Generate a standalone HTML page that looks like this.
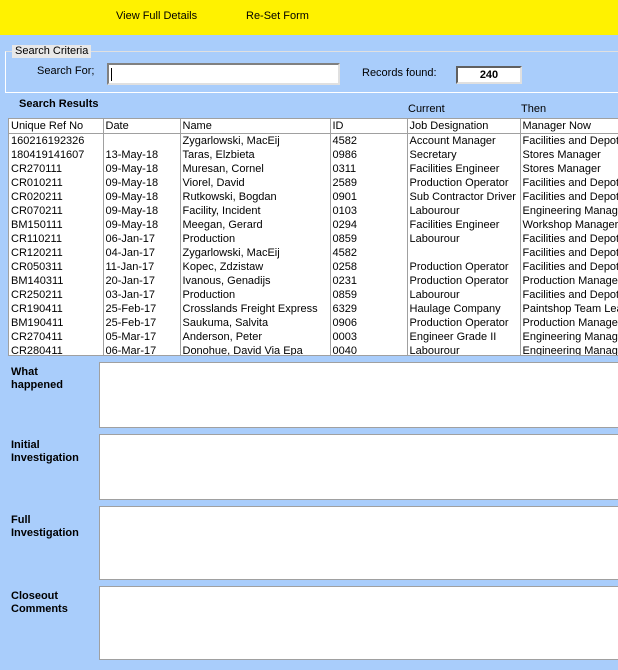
<!DOCTYPE html><html><head><style>
body{margin:0;width:618px;height:670px;overflow:hidden;background:#a9cdfb;font-family:"Liberation Sans","DejaVu Sans",sans-serif;font-size:11px;color:#000;position:relative}
.a{position:absolute}
.top{left:0;top:0;width:618px;height:35px;background:#fff200}
table{border-collapse:collapse;table-layout:fixed}
td{border-right:1px solid #a0a0a0;height:14px;padding:0 0 0 2px;white-space:nowrap;overflow:hidden;line-height:14px}
tr.h td{border-bottom:1px solid #a0a0a0;height:13px}
.box{background:#fff;border:1px solid #a0a0a0;box-sizing:border-box}
.lbl{font-weight:bold;left:11px;line-height:13px}
</style></head><body>
<div class="a top"></div>
<div class="a" style="left:116px;top:10px">View Full Details</div>
<div class="a" style="left:246px;top:10px">Re-Set Form</div>
<div class="a" style="left:5px;top:51px;width:620px;height:42px;border:1px solid #fff;border-top-color:#e0e0e0;box-sizing:border-box;border-right:none"></div>
<div class="a" style="left:12px;top:45px;background:#e8e8e8;padding:0 3px;line-height:13px">Search Criteria</div>
<div class="a" style="left:37px;top:65px">Search For;</div>
<div class="a box" style="left:107px;top:63px;width:233px;height:22px;border:2px solid;border-color:#808080 #e0e0e0 #e0e0e0 #808080"><div style="position:absolute;left:2px;top:3px;width:1px;height:13px;background:#000"></div></div>
<div class="a" style="left:362px;top:67px">Records found:</div>
<div class="a box" style="left:456px;top:66px;width:66px;height:18px;border:2px solid;border-color:#606060 #e0e0e0 #e0e0e0 #606060;text-align:center;font-weight:bold;line-height:14px">240</div>
<div class="a" style="left:19px;top:98px;font-weight:bold">Search Results</div>
<div class="a" style="left:408px;top:103px">Current</div>
<div class="a" style="left:521px;top:103px">Then</div>
<div class="a" style="left:8px;top:118px;width:612px;height:238px;background:#fff;border:1px solid #a0a0a0;border-right:none;overflow:hidden;box-sizing:border-box">
<table style="width:620px">
<colgroup><col style="width:94px"><col style="width:77px"><col style="width:150px"><col style="width:77px"><col style="width:113px"><col style="width:109px"></colgroup>
<tr class="h"><td>Unique Ref No</td><td>Date</td><td>Name</td><td>ID</td><td>Job Designation</td><td>Manager Now</td></tr>
<tr><td>160216192326</td><td></td><td>Zygarlowski, MacEij</td><td>4582</td><td>Account Manager</td><td>Facilities and Depot</td></tr>
<tr><td>180419141607</td><td>13-May-18</td><td>Taras, Elzbieta</td><td>0986</td><td>Secretary</td><td>Stores Manager</td></tr>
<tr><td>CR270111</td><td>09-May-18</td><td>Muresan, Cornel</td><td>0311</td><td>Facilities Engineer</td><td>Stores Manager</td></tr>
<tr><td>CR010211</td><td>09-May-18</td><td>Viorel, David</td><td>2589</td><td>Production Operator</td><td>Facilities and Depot</td></tr>
<tr><td>CR020211</td><td>09-May-18</td><td>Rutkowski, Bogdan</td><td>0901</td><td>Sub Contractor Driver</td><td>Facilities and Depot</td></tr>
<tr><td>CR070211</td><td>09-May-18</td><td>Facility, Incident</td><td>0103</td><td>Labourour</td><td>Engineering Manager</td></tr>
<tr><td>BM150111</td><td>09-May-18</td><td>Meegan, Gerard</td><td>0294</td><td>Facilities Engineer</td><td>Workshop Manager</td></tr>
<tr><td>CR110211</td><td>06-Jan-17</td><td>Production</td><td>0859</td><td>Labourour</td><td>Facilities and Depot</td></tr>
<tr><td>CR120211</td><td>04-Jan-17</td><td>Zygarlowski, MacEij</td><td>4582</td><td></td><td>Facilities and Depot</td></tr>
<tr><td>CR050311</td><td>11-Jan-17</td><td>Kopec, Zdzistaw</td><td>0258</td><td>Production Operator</td><td>Facilities and Depot</td></tr>
<tr><td>BM140311</td><td>20-Jan-17</td><td>Ivanous, Genadijs</td><td>0231</td><td>Production Operator</td><td>Production Manager</td></tr>
<tr><td>CR250211</td><td>03-Jan-17</td><td>Production</td><td>0859</td><td>Labourour</td><td>Facilities and Depot</td></tr>
<tr><td>CR190411</td><td>25-Feb-17</td><td>Crosslands Freight Express</td><td>6329</td><td>Haulage Company</td><td>Paintshop Team Leader</td></tr>
<tr><td>BM190411</td><td>25-Feb-17</td><td>Saukuma, Salvita</td><td>0906</td><td>Production Operator</td><td>Production Manager</td></tr>
<tr><td>CR270411</td><td>05-Mar-17</td><td>Anderson, Peter</td><td>0003</td><td>Engineer Grade II</td><td>Engineering Manager</td></tr>
<tr><td>CR280411</td><td>06-Mar-17</td><td>Donohue, David Via Epa</td><td>0040</td><td>Labourour</td><td>Engineering Manager</td></tr>
</table></div>
<div class="a lbl" style="top:366px">What<br>happened</div>
<div class="a box" style="left:99px;top:362px;width:525px;height:66px"></div>
<div class="a lbl" style="top:439px">Initial<br>Investigation</div>
<div class="a box" style="left:99px;top:434px;width:525px;height:66px"></div>
<div class="a lbl" style="top:514px">Full<br>Investigation</div>
<div class="a box" style="left:99px;top:506px;width:525px;height:74px"></div>
<div class="a lbl" style="top:590px">Closeout<br>Comments</div>
<div class="a box" style="left:99px;top:586px;width:525px;height:74px"></div>
</body></html>
